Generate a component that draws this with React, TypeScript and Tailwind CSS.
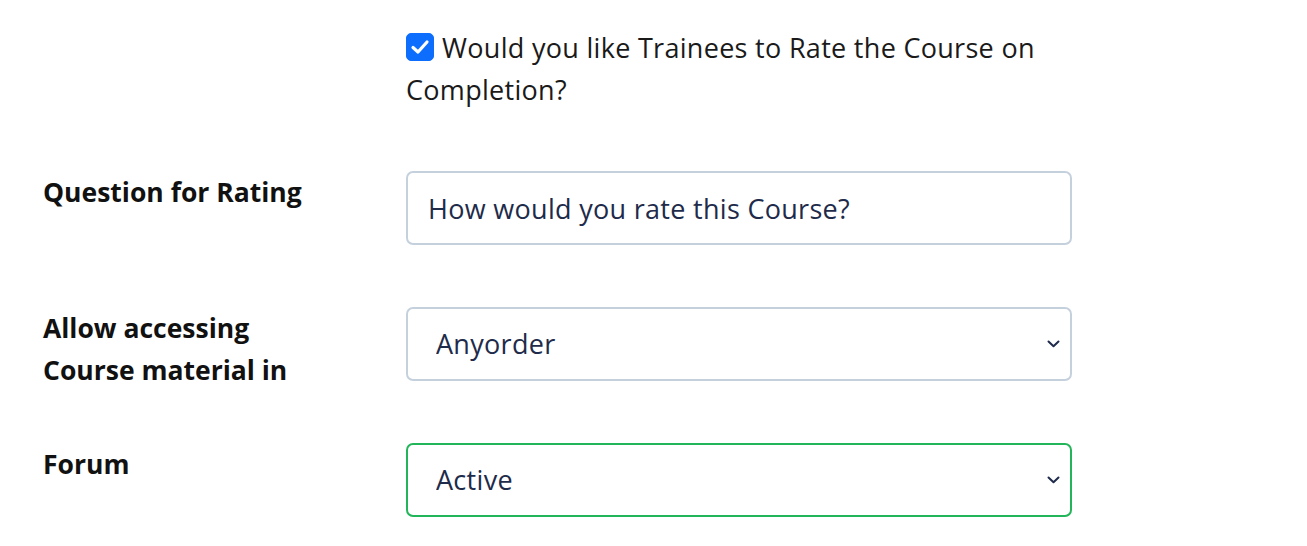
import { useState } from "react";

function Chevron() {
  return (
    <svg className="pointer-events-none absolute right-[12px] top-1/2 -translate-y-1/2" width="13" height="8" viewBox="0 0 13 8" fill="none">
      <path d="M1.5 1.5L6.5 6.3L11.5 1.5" stroke="#1e2b4a" strokeWidth="2" strokeLinecap="round" strokeLinejoin="round" />
    </svg>
  );
}

export default function App() {
  const [rate, setRate] = useState(true);
  const [question, setQuestion] = useState("How would you rate this Course?");
  const [order, setOrder] = useState("Anyorder");
  const [forum, setForum] = useState("Active");

  const label = "h-[74px] font-bold text-[26.5px] leading-[42px] text-[#111111]";
  const field = "w-full h-[74px] rounded-[7px] border-2 bg-white text-[27px] tracking-[0.3px] text-[#1e2b4a] outline-none";

  return (
    <div className="w-[1307px] h-[546px] bg-white font-['Open_Sans',sans-serif] pl-[43px] pt-[27px]">
      <div className="grid grid-cols-[363px_666px] gap-y-[62px]">
        <div />
        <label className="flex w-[660px] -mb-[2px] text-[27px] tracking-[0.3px] leading-[42px] text-[#1a1a1a]">
          <span className="block">
            <span className="inline-flex align-[-3px] mr-[8px]">
              <input
                type="checkbox"
                checked={rate}
                onChange={(e) => setRate(e.target.checked)}
                className="appearance-none w-[28px] h-[28px] rounded-[5px] bg-[#0d6efd] border border-[#0d6efd] cursor-pointer"
              />
              {rate && (
                <svg className="pointer-events-none absolute ml-[4px] mt-[5px]" width="20" height="18" viewBox="0 0 20 18" fill="none">
                  <path d="M3 9.5L8 14L17 4" stroke="white" strokeWidth="3.2" strokeLinecap="round" strokeLinejoin="round" />
                </svg>
              )}
            </span>
            Would you like Trainees to Rate the Course on Completion?
          </span>
        </label>

        <div className={label}>Question for Rating</div>
        <input
          value={question}
          onChange={(e) => setQuestion(e.target.value)}
          className={`${field} border-[#c5d0dd] px-[20px]`}
        />

        <div className={`${label} w-[280px]`}>Allow accessing Course material in</div>
        <div className="relative">
          <select value={order} onChange={(e) => setOrder(e.target.value)} className={`${field} appearance-none border-[#c5d0dd] pl-[28px]`}>
            <option>Anyorder</option>
            <option>Sequential order</option>
          </select>
          <Chevron />
        </div>

        <div className={label}>Forum</div>
        <div className="relative">
          <select value={forum} onChange={(e) => setForum(e.target.value)} className={`${field} appearance-none border-[#22b55a] pl-[28px]`}>
            <option>Active</option>
            <option>Inactive</option>
          </select>
          <Chevron />
        </div>
      </div>
    </div>
  );
}
